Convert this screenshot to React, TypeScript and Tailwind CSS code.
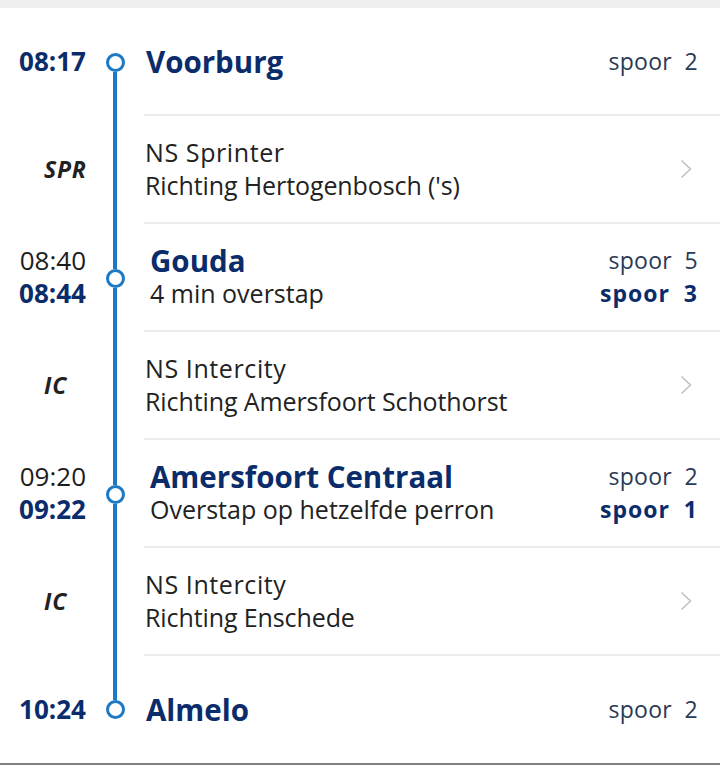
type Stop = {
  kind: "stop";
  times: { t: string; bold: boolean }[];
  name: string;
  note?: string;
  tracks: { t: string; bold: boolean }[];
  pos: "first" | "mid" | "last";
};

type Leg = {
  kind: "leg";
  mode: string;
  train: string;
  dir: string;
};

const rows: (Stop | Leg)[] = [
  {
    kind: "stop",
    times: [{ t: "08:17", bold: true }],
    name: "Voorburg",
    tracks: [{ t: "spoor  2", bold: false }],
    pos: "first",
  },
  { kind: "leg", mode: "SPR", train: "NS Sprinter", dir: "Richting Hertogenbosch ('s)" },
  {
    kind: "stop",
    times: [
      { t: "08:40", bold: false },
      { t: "08:44", bold: true },
    ],
    name: "Gouda",
    note: "4 min overstap",
    tracks: [
      { t: "spoor  5", bold: false },
      { t: "spoor  3", bold: true },
    ],
    pos: "mid",
  },
  { kind: "leg", mode: "IC", train: "NS Intercity", dir: "Richting Amersfoort Schothorst" },
  {
    kind: "stop",
    times: [
      { t: "09:20", bold: false },
      { t: "09:22", bold: true },
    ],
    name: "Amersfoort Centraal",
    note: "Overstap op hetzelfde perron",
    tracks: [
      { t: "spoor  2", bold: false },
      { t: "spoor  1", bold: true },
    ],
    pos: "mid",
  },
  { kind: "leg", mode: "IC", train: "NS Intercity", dir: "Richting Enschede" },
  {
    kind: "stop",
    times: [{ t: "10:24", bold: true }],
    name: "Almelo",
    tracks: [{ t: "spoor  2", bold: false }],
    pos: "last",
  },
];

const Timeline = ({ pos }: { pos?: "first" | "mid" | "last" }) => (
  <div className="w-[58px] shrink-0 flex flex-col items-center">
    <div className={`w-[4px] flex-1 ${pos === "first" ? "bg-transparent" : "bg-[#1d79c4]"}`} />
    {pos && (
      <div className="w-[19px] h-[19px] rounded-full border-[3px] border-[#1d79c4] bg-white shrink-0" />
    )}
    <div className={`w-[4px] flex-1 ${pos === "last" ? "bg-transparent" : "bg-[#1d79c4]"}`} />
  </div>
);

// thin grey chevron at the end of a leg row
const Chevron = () => (
  <svg width="12" height="20" viewBox="0 0 12 20" fill="none" className="shrink-0">
    <path d="M1.5 1.5 L10.5 10 L1.5 18.5" stroke="#bdbdbd" strokeWidth="1.4" />
  </svg>
);

export default function App() {
  return (
    <div
      className="w-[720px] h-[765px] bg-white flex flex-col overflow-hidden"
      style={{ fontFamily: '"Open Sans", "Noto Sans", sans-serif' }}
    >
      <div className="h-[8px] bg-[#efefef] shrink-0" />
      {rows.map((row, i) => {
        const last = i === rows.length - 1;
        if (row.kind === "leg") {
          return (
            <div key={i} className="flex h-[108px] shrink-0">
              <div className="w-[86px] shrink-0 flex items-center pl-[44px] pb-[2px]">
                <span className="text-[23px] font-bold italic text-[#222] tracking-[0.8px]">{row.mode}</span>
              </div>
              <Timeline />
              <div className="flex-1 flex items-center border-b-2 border-[#ebebeb] pl-[1px] pr-[28px]">
                <div className="flex-1 text-[25px] leading-[33px] text-[#222]">
                  <div className="tracking-[0.6px]">{row.train}</div>
                  <div className="tracking-[-0.1px]">{row.dir}</div>
                </div>
                <Chevron />
              </div>
            </div>
          );
        }
        return (
          <div key={i} className={`flex shrink-0 ${last ? "h-[107px]" : "h-[108px]"}`}>
            <div className={`w-[86px] shrink-0 flex flex-col justify-center items-end ${last ? "" : "pb-[2px]"}`}>
              {row.times.map((t, j) => (
                <div
                  key={j}
                  className={`text-[26px] leading-[33px] ${t.bold ? "font-bold text-[#0b2c6b]" : "text-[#1c1c1c]"}`}
                >
                  {t.t}
                </div>
              ))}
            </div>
            <Timeline pos={row.pos} />
            <div
              className={`flex-1 flex items-center pr-[22px] ${last ? "" : "border-b-2 border-[#ebebeb]"} ${
                row.note ? "pl-[6px]" : "pl-[2px]"
              }`}
            >
              <div className="flex-1">
                <div className="text-[29.5px] leading-[33px] font-bold text-[#0b2c6b]">{row.name}</div>
                {row.note && <div className="text-[25px] leading-[33px] text-[#222]">{row.note}</div>}
              </div>
              <div className="flex flex-col items-end">
                {row.tracks.map((t, j) => (
                  <div
                    key={j}
                    className={`text-[23px] leading-[33px] whitespace-pre ${
                      t.bold ? "font-bold text-[#0b2c6b] tracking-[1px]" : "text-[#2a3a55] tracking-[0.3px]"
                    }`}
                  >
                    {t.t}
                  </div>
                ))}
              </div>
            </div>
          </div>
        );
      })}
      <div className="h-[2px] bg-[#808080] shrink-0" />
    </div>
  );
}
